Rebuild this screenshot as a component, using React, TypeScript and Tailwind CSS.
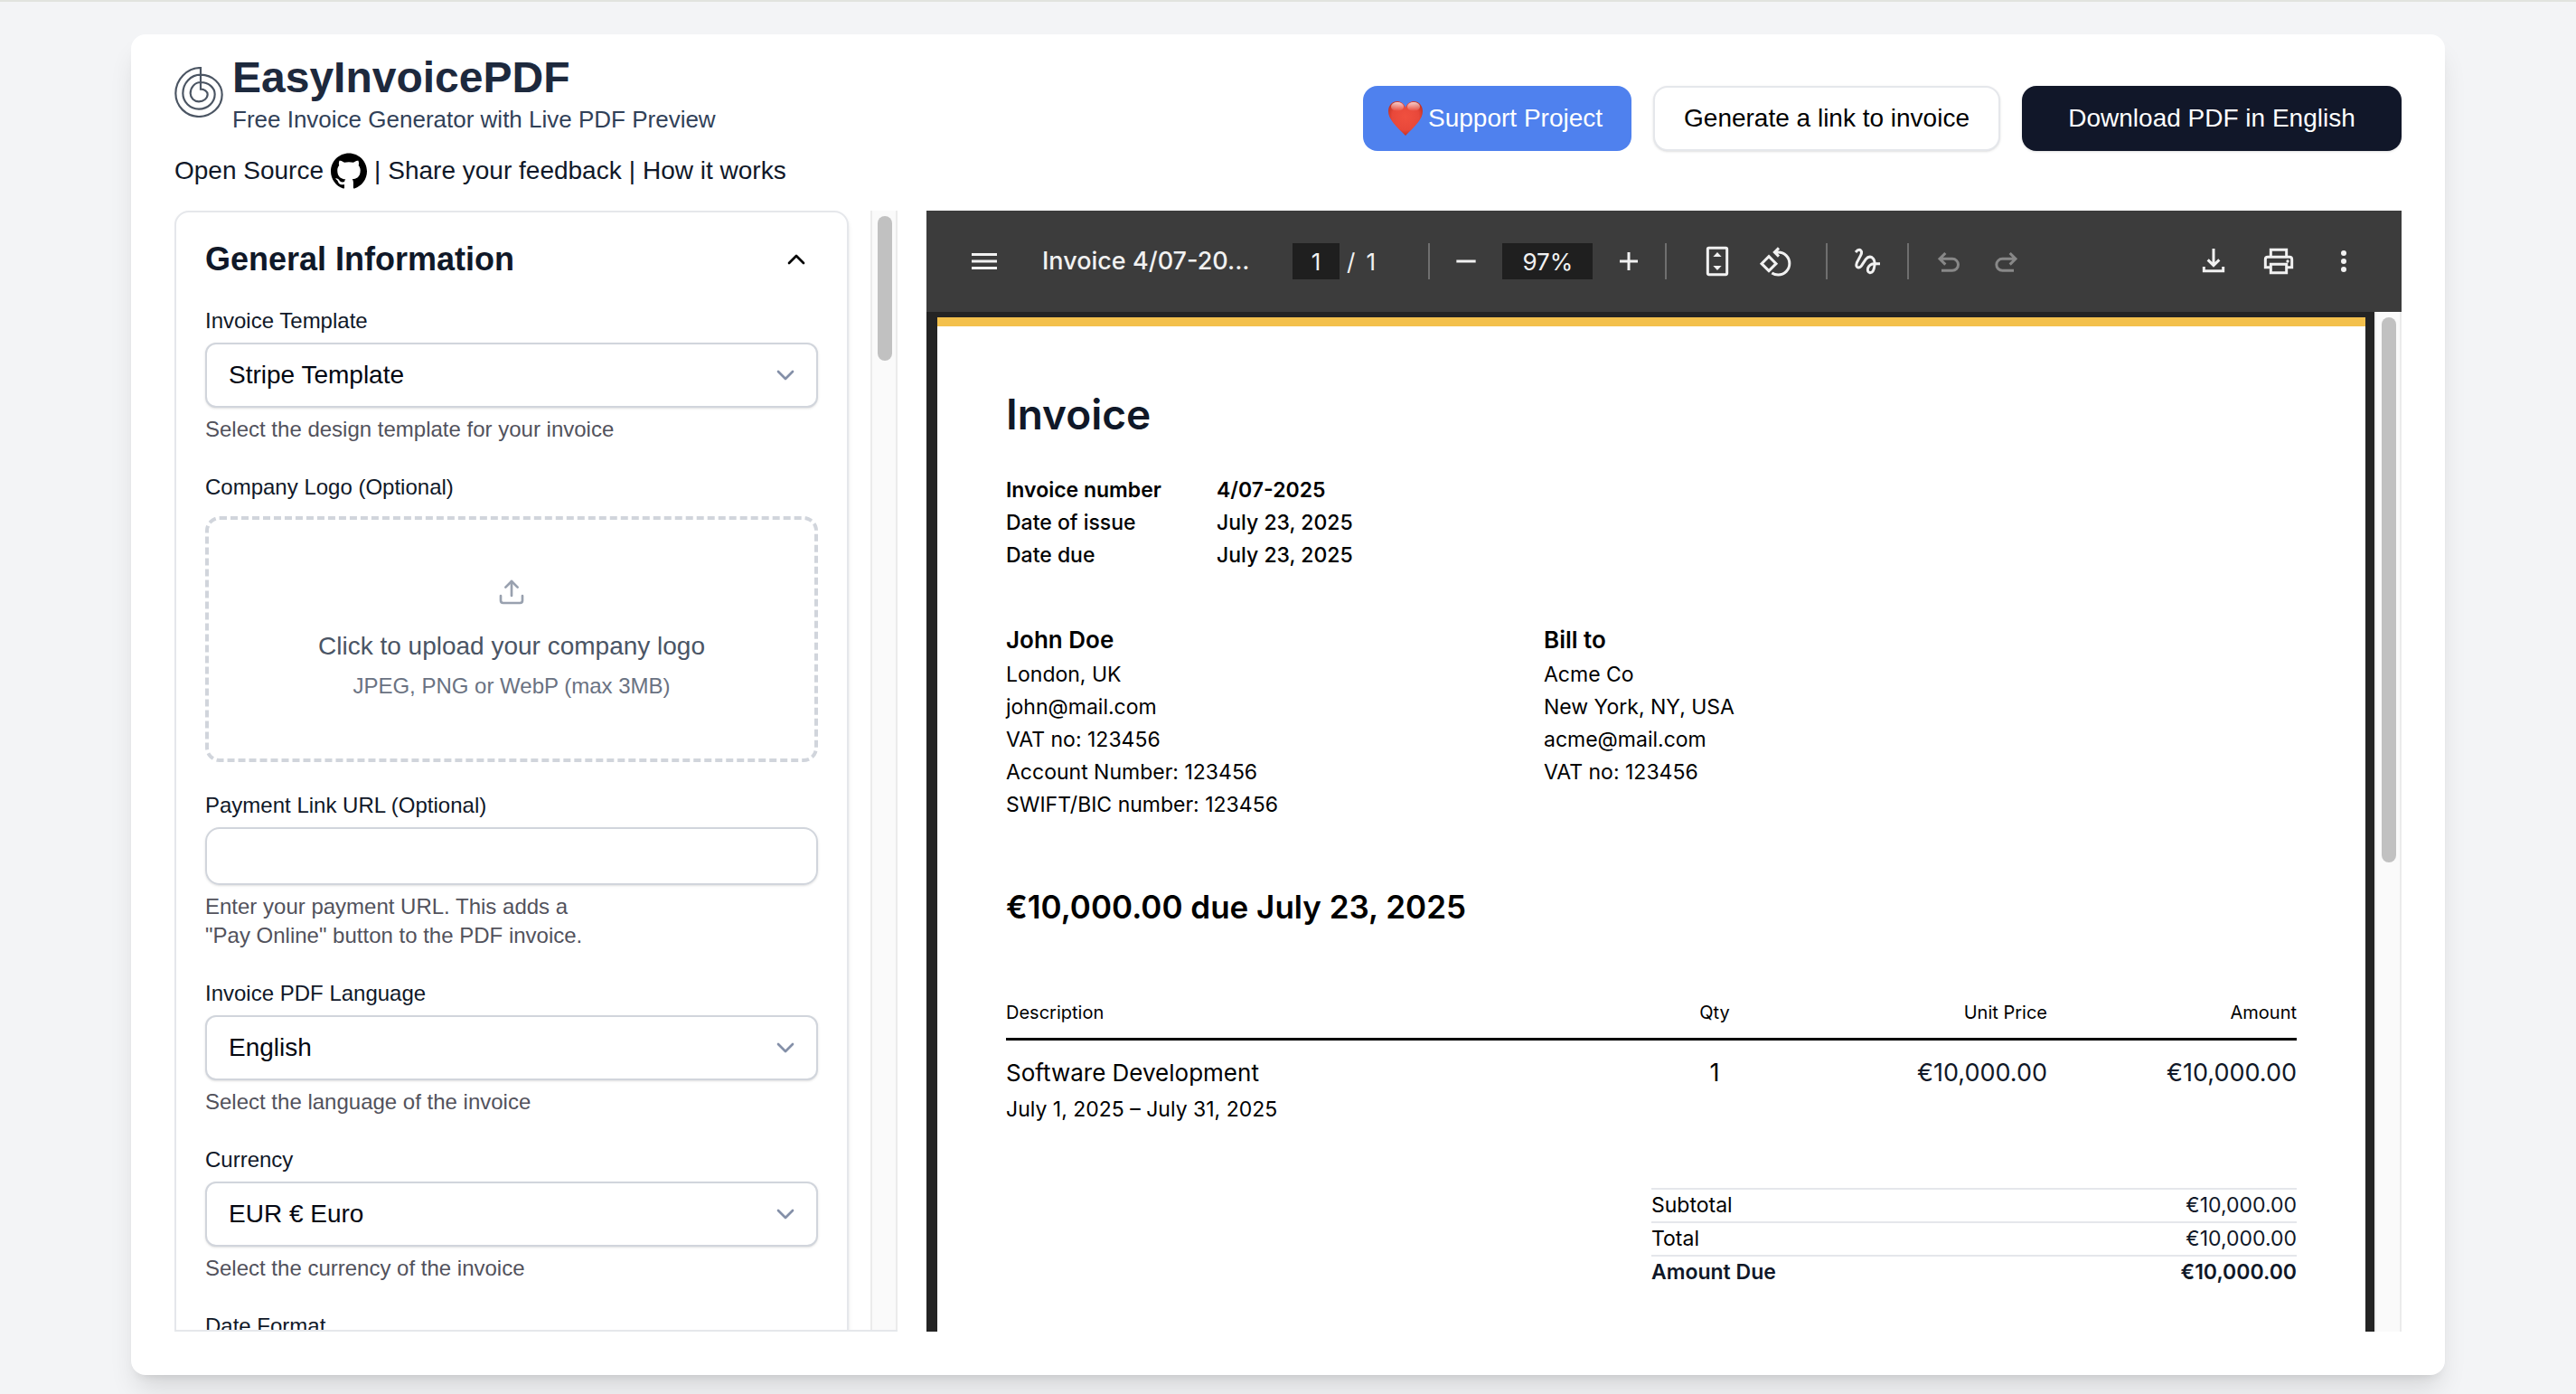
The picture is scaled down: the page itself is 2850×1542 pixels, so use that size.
import { useState, type ReactNode } from "react";
import { ChevronDown, ChevronUp, Upload } from "lucide-react";
import { SiGithub } from "react-icons/si";

/* ---------- drawings ---------- */

function SpiralLogo() {
  return (
    <svg viewBox="26 45 160 168" className="h-14 w-[54px] shrink-0" fill="none" stroke="#4b5563" strokeWidth="6.5" aria-hidden="true">
      <path d="M112 48A84 85 0 0 0 29 133A78 77 0 0 0 106 210A78 73 0 0 0 183 137A72 66 0 0 0 112 71A59 62 0 0 0 53 133A53 52 0 0 0 106 185A53 49 0 0 0 159 136A47 40 0 0 0 112 96A34 37 0 0 0 78 133A28 27 0 0 0 106 160A29 24 0 0 0 135 136A23 17 0 0 0 112 119Z" />
    </svg>
  );
}

function Heart() {
  return (
    <svg viewBox="0 0 38 38" className="size-[38px]" aria-hidden="true">
      <defs>
        <radialGradient id="heart-fill" cx="50%" cy="45%" r="60%">
          <stop offset="0" stopColor="#f0503f" />
          <stop offset="0.65" stopColor="#e8483a" />
          <stop offset="1" stopColor="#b92a1c" />
        </radialGradient>
        <linearGradient id="heart-shine" x1="0" y1="0" x2="0" y2="1">
          <stop offset="0" stopColor="#fff" stopOpacity="0.75" />
          <stop offset="1" stopColor="#fff" stopOpacity="0" />
        </linearGradient>
      </defs>
      <path fill="url(#heart-fill)" d="M19 7C17 2 13.500 0 10 0C4.500 0 0 4.500 0 11C0 20 8 27 19 38C30 27 38 20 38 11C38 4.500 33.500 0 28 0C24.500 0 21 2 19 7Z" />
      <ellipse cx="10" cy="6" rx="7" ry="5" fill="url(#heart-shine)" />
      <ellipse cx="28" cy="6" rx="7" ry="5" fill="url(#heart-shine)" />
    </svg>
  );
}

function ToolIcon({ viewBox = "0 0 120 120", children }: { viewBox?: string; children: ReactNode }) {
  return (
    <svg viewBox={viewBox} className="size-10" fill="none" stroke="currentColor" strokeWidth="9" aria-hidden="true">
      {children}
    </svg>
  );
}

/* ---------- form pieces ---------- */

function Scrollbar({ thumb }: { thumb: string }) {
  return (
    <div className="w-[30px] shrink-0 border-x-2 border-[#ebebeb] bg-[#fafafa] pt-[6px] pr-1 pl-[6px]" aria-hidden="true">
      <div className={`rounded-full bg-[#c1c1c1] ${thumb}`} />
    </div>
  );
}

function Field({ id, label, help, children }: { id: string; label: string; help?: ReactNode; children?: ReactNode }) {
  return (
    <div className="flex flex-col gap-2">
      <label htmlFor={id} className="text-[24px] leading-8 text-gray-900">
        {label}
      </label>
      {children}
      {help && <p className="text-[24px] leading-8 text-zinc-600">{help}</p>}
    </div>
  );
}

function Select({ id, options }: { id: string; options: string[] }) {
  return (
    <div className="relative">
      <select
        id={id}
        className="h-[72px] w-full appearance-none rounded-xl border-2 border-gray-300 bg-white px-6 text-[28px] text-gray-950 shadow-sm"
      >
        {options.map((o) => (
          <option key={o}>{o}</option>
        ))}
      </select>
      <ChevronDown className="pointer-events-none absolute top-5 right-5 size-8 text-[#8490a8]" />
    </div>
  );
}

function InvoiceForm() {
  const [open, setOpen] = useState(true);
  return (
    <form className="flex h-[calc(100vh-302px)] min-w-0 overflow-hidden border-b-2 border-gray-200 lg:col-span-4">
      <div className="min-w-0 flex-1 overflow-hidden pr-6">
        <section className="rounded-2xl border-2 border-gray-200 bg-white p-8 pb-16 shadow-md">
          <div className="flex items-center justify-between pr-2">
            <h2 className="text-[36px] leading-10 font-bold text-gray-900">General Information</h2>
            <button type="button" aria-label="Toggle General Information" onClick={() => setOpen(!open)}>
              <ChevronUp className="size-8 text-black" />
            </button>
          </div>
          {open && (
            <div className="mt-8 flex flex-col gap-8">
              <Field id="template" label="Invoice Template" help="Select the design template for your invoice">
                <Select id="template" options={["Stripe Template", "Default Template"]} />
              </Field>
              <div className="flex flex-col gap-4">
                <span className="text-[24px] leading-8 text-gray-900">Company Logo (Optional)</span>
                <label
                  htmlFor="logo"
                  className="relative flex cursor-pointer flex-col items-center rounded-2xl border-4 border-dashed border-gray-300 py-16"
                >
                  <input id="logo" type="file" accept="image/*" className="sr-only" />
                  <Upload className="size-8 text-gray-400" />
                  <span className="mt-6 text-[28px] leading-10 text-gray-600">Click to upload your company logo</span>
                  <span className="mt-2 text-[24px] leading-8 text-gray-500">JPEG, PNG or WebP (max 3MB)</span>
                </label>
              </div>
              <Field
                id="payment"
                label="Payment Link URL (Optional)"
                help={
                  <>
                    Enter your payment URL. This adds a<br />
                    &quot;Pay Online&quot; button to the PDF invoice.
                  </>
                }
              >
                <input id="payment" type="url" className="h-16 w-full rounded-2xl border-2 border-gray-300 px-6 text-[28px] shadow-sm" />
              </Field>
              <Field id="language" label="Invoice PDF Language" help="Select the language of the invoice">
                <Select id="language" options={["English", "Polish", "German"]} />
              </Field>
              <Field id="currency" label="Currency" help="Select the currency of the invoice">
                <Select id="currency" options={["EUR € Euro", "USD $ US Dollar"]} />
              </Field>
              <Field id="date-format" label="Date Format">
                <Select id="date-format" options={["YYYY-MM-DD"]} />
              </Field>
            </div>
          )}
        </section>
      </div>
      <Scrollbar thumb="h-40" />
    </form>
  );
}

/* ---------- PDF viewer ---------- */

const Divider = () => <span className="h-10 w-[2px] bg-[#6f6f6f]" />;

function Toolbar() {
  return (
    <div className="flex h-28 shrink-0 items-center bg-[#3c3c3c] px-11 font-['Inter',sans-serif] text-[26px] text-[#f1f1f1]">
      <button type="button" aria-label="Menu">
        <ToolIcon>
          <path d="M18 37.500H102M18 60H102M18 82.500H102" />
        </ToolIcon>
      </button>
      <span className="ml-11 w-[277px] text-[27px] font-medium whitespace-nowrap">Invoice 4/07-20...</span>
      <input aria-label="Page number" defaultValue="1" className="h-10 w-[52px] bg-[#1f1f1f] text-center" />
      <span className="ml-2">/</span>
      <span className="ml-3 w-[69px]">1</span>
      <Divider />
      <button type="button" aria-label="Zoom out" className="ml-5">
        <ToolIcon>
          <path d="M28 60H92" />
        </ToolIcon>
      </button>
      <input aria-label="Zoom level" defaultValue="97%" className="ml-5 h-10 w-[100px] bg-[#1f1f1f] text-center" />
      <button type="button" aria-label="Zoom in" className="ml-5">
        <ToolIcon>
          <path d="M30 60H90M60 30V90" />
        </ToolIcon>
      </button>
      <span className="w-5" />
      <Divider />
      <button type="button" aria-label="Fit to page" className="ml-9">
        <ToolIcon viewBox="30 27 120 120">
          <rect x="58" y="43" width="64" height="88" rx="4" />
          <path d="M76 72L90 57L104 72ZM76 102H104L90 117Z" fill="currentColor" stroke="none" />
        </ToolIcon>
      </button>
      <button type="button" aria-label="Rotate counterclockwise" className="ml-6">
        <ToolIcon viewBox="219 27 120 120">
          <path d="M258 71L282 95L258 119L234 95ZM278 57H289A37.500 37.500 0 0 1 289 132Q277 132 268 126M291 43L277 57L291 71" />
        </ToolIcon>
      </button>
      <span className="w-9" />
      <Divider />
      <button type="button" aria-label="Draw" className="ml-6">
        <ToolIcon viewBox="528 27 120 120">
          <path d="M549 57Q558 46 565 50Q572 55 566 67L553 92Q548 106 558 108Q565 108 571 98L583 80Q592 69 603 74Q614 81 612 100Q609 126 596 125Q586 122 590 109Q596 94 614 95H630" />
        </ToolIcon>
      </button>
      <span className="w-6" />
      <Divider />
      <button type="button" aria-label="Undo" className="ml-6 text-[#888]" disabled>
        <ToolIcon viewBox="798 27 120 120">
          <path d="M834 118H870A19.500 19.500 0 0 0 870 79H829M847 60L828 79L847 98" />
        </ToolIcon>
      </button>
      <button type="button" aria-label="Redo" className="ml-6 text-[#888]" disabled>
        <ToolIcon viewBox="990 27 120 120">
          <path d="M1074 118H1036A19.500 19.500 0 0 1 1036 79H1078M1061 60L1080 79L1061 98" />
        </ToolIcon>
      </button>
      <div className="ml-auto flex items-center gap-8">
        <button type="button" aria-label="Download">
          <ToolIcon>
            <path d="M60 18V72M41 55L60 74L79 55M28 78V92H92V78" />
          </ToolIcon>
        </button>
        <button type="button" aria-label="Print">
          <ToolIcon>
            <path d="M34 46V22H86V46M32 80H16V54Q16 46 24 46H96Q104 46 104 54V80H88M34 70H86V98H34Z" />
            <circle cx="90" cy="60" r="5" fill="currentColor" stroke="none" />
          </ToolIcon>
        </button>
        <button type="button" aria-label="More actions">
          <ToolIcon>
            <g fill="currentColor" stroke="none">
              <circle cx="60" cy="33" r="9" />
              <circle cx="60" cy="60" r="9" />
              <circle cx="60" cy="87" r="9" />
            </g>
          </ToolIcon>
        </button>
      </div>
    </div>
  );
}

const meta = [
  ["Invoice number", "4/07-2025", "font-semibold"],
  ["Date of issue", "July 23, 2025", "font-medium"],
  ["Date due", "July 23, 2025", "font-medium"],
];

const seller = ["London, UK", "john@mail.com", "VAT no: 123456", "Account Number: 123456", "SWIFT/BIC number: 123456"];
const buyer = ["Acme Co", "New York, NY, USA", "acme@mail.com", "VAT no: 123456"];

function Party({ name, lines, className }: { name: string; lines: string[]; className: string }) {
  return (
    <div className={className}>
      <h3 className="text-[26px] leading-10 font-semibold">{name}</h3>
      {lines.map((l) => (
        <p key={l} className="text-[23px] leading-9">
          {l}
        </p>
      ))}
    </div>
  );
}

function InvoicePage() {
  return (
    <article className="flex-1 border-t-[10px] border-[#f3c04c] bg-white px-[76px] pt-[67px] font-['Inter',sans-serif] text-black">
      <h1 className="text-[46px] leading-[60px] font-semibold text-gray-900">Invoice</h1>
      <dl className="mt-9 text-[23px] leading-9">
        {meta.map(([k, v, weight]) => (
          <div key={k} className={`flex ${weight}`}>
            <dt className="w-[233px]">{k}</dt>
            <dd>{v}</dd>
          </div>
        ))}
      </dl>
      <div className="mt-14 flex">
        <Party name="John Doe" lines={seller} className="w-5/12" />
        <Party name="Bill to" lines={buyer} className="flex-1" />
      </div>
      <h2 className="mt-[71px] text-[35px] leading-[48px] font-semibold">€10,000.00 due July 23, 2025</h2>
      <table className="mt-[77px] w-full table-fixed">
        <thead>
          <tr className="border-b-[3px] border-black text-[20px] leading-8">
            <th className="w-1/2 pb-3 text-left font-normal">Description</th>
            <th className="w-[140px] pb-3 text-center font-normal">Qty</th>
            <th className="pb-3 text-right font-normal">Unit Price</th>
            <th className="w-[276px] pb-3 text-right font-normal">Amount</th>
          </tr>
        </thead>
        <tbody>
          <tr className="align-top text-[27px] leading-10">
            <td className="pt-4">
              <p className="text-[26px]">Software Development</p>
              <p className="text-[23px]">July 1, 2025 – July 31, 2025</p>
            </td>
            <td className="pt-4 text-center">1</td>
            <td className="pt-4 text-right text-gray-900">€10,000.00</td>
            <td className="pt-4 text-right text-gray-900">€10,000.00</td>
          </tr>
        </tbody>
      </table>
      <dl className="mt-[67px] ml-auto w-1/2 text-[23px] leading-[35px]">
        <div className="flex justify-between border-t-2 border-gray-200">
          <dt>Subtotal</dt>
          <dd className="text-gray-900">€10,000.00</dd>
        </div>
        <div className="flex justify-between border-t-2 border-gray-200">
          <dt>Total</dt>
          <dd className="text-gray-900">€10,000.00</dd>
        </div>
        <div className="flex justify-between border-t-2 border-gray-200 font-semibold text-gray-900">
          <dt>Amount Due</dt>
          <dd>€10,000.00</dd>
        </div>
      </dl>
    </article>
  );
}

function PdfViewer() {
  return (
    <section className="flex h-[calc(100vh-302px)] min-w-0 flex-col overflow-hidden lg:col-span-8">
      <Toolbar />
      <div className="flex min-h-0 flex-1 bg-[#242424]">
        <div className="flex min-w-0 flex-1 overflow-hidden pt-[6px] pr-[10px] pl-3">
          <InvoicePage />
        </div>
        <Scrollbar thumb="h-[603px]" />
      </div>
    </section>
  );
}

/* ---------- page ---------- */

export default function App() {
  return (
    <div className="flex min-h-screen justify-center overflow-hidden border-t-2 border-[#e1e3de] bg-gray-100 px-4 pt-9 font-['Liberation_Sans',Arial,sans-serif]">
      <main className="mb-5 w-full max-w-[2560px] self-start rounded-2xl bg-white px-12 pt-5 pb-12 shadow-[0_20px_30px_-6px_rgb(0_0_0/0.12),0_8px_12px_-8px_rgb(0_0_0/0.12)]">
        <header className="flex items-center justify-between">
          <div>
            <div className="flex items-start gap-[10px]">
              <div className="pt-4">
                <SpiralLogo />
              </div>
              <div>
                <h1 className="text-[48px] leading-[56px] font-bold text-slate-800">EasyInvoicePDF</h1>
                <p className="text-[26px] leading-[37px] text-slate-700">Free Invoice Generator with Live PDF Preview</p>
              </div>
            </div>
            <nav className="mt-[18px] flex items-center gap-2 text-[28px] leading-10 text-gray-900">
              <a href="#source" className="flex items-center gap-2">
                Open Source
                <SiGithub className="size-10 text-black" />
              </a>
              <span>|</span>
              <a href="#feedback">Share your feedback</a>
              <span>|</span>
              <a href="#how">How it works</a>
            </nav>
          </div>
          <div className="mb-[5px] flex gap-6 text-[28px]">
            <a href="#support" className="flex h-[72px] items-center gap-[6px] rounded-2xl bg-[#4f81ee] pr-8 pl-7 text-white">
              <Heart />
              Support Project
            </a>
            <button type="button" className="h-[72px] rounded-2xl border-2 border-gray-200 bg-white px-8 text-black shadow-sm">
              Generate a link to invoice
            </button>
            <button type="button" className="h-[72px] w-[420px] rounded-2xl bg-[#111729] text-white shadow-sm">
              Download PDF in English
            </button>
          </div>
        </header>
        <div className="mt-6 grid gap-8 lg:grid-cols-12">
          <InvoiceForm />
          <PdfViewer />
        </div>
      </main>
    </div>
  );
}
